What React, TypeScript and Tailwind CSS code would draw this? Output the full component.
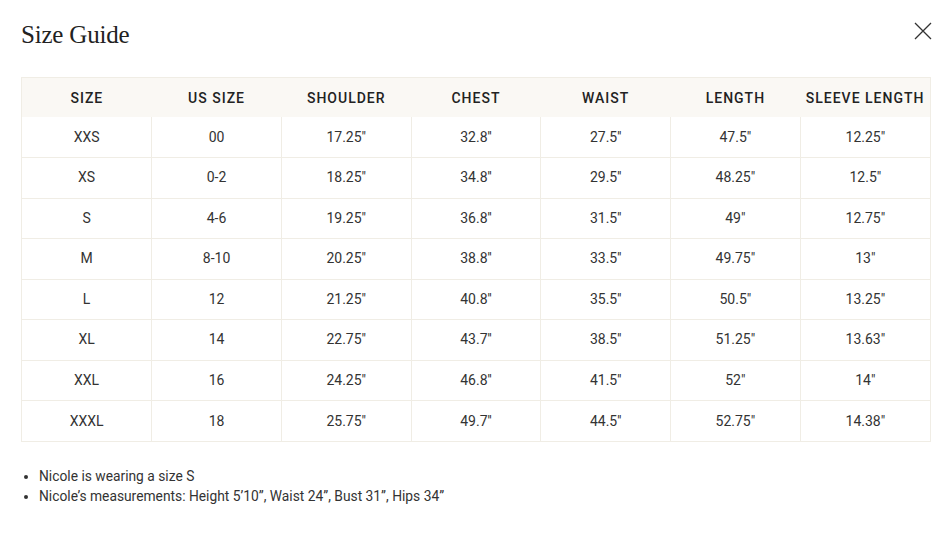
import React from 'react';

const headers = ['Size', 'US Size', 'Shoulder', 'Chest', 'Waist', 'Length', 'Sleeve Length'];

const rows = [
  ['XXS', '00', '17.25"', "32.8''", "27.5''", '47.5"', '12.25"'],
  ['XS', '0-2', '18.25"', "34.8''", "29.5''", '48.25"', '12.5"'],
  ['S', '4-6', '19.25"', "36.8''", "31.5''", '49"', '12.75"'],
  ['M', '8-10', '20.25"', "38.8''", "33.5''", '49.75"', '13"'],
  ['L', '12', '21.25"', "40.8''", "35.5''", '50.5"', '13.25"'],
  ['XL', '14', '22.75"', "43.7''", "38.5''", '51.25"', '13.63"'],
  ['XXL', '16', '24.25"', "46.8''", "41.5''", '52"', '14"'],
  ['XXXL', '18', '25.75"', "49.7''", "44.5''", '52.75"', '14.38"'],
];

const App = () => {
  return (
    <div className="w-[942px] h-[535px] bg-white text-[#2b2b2b] font-['Roboto','Liberation_Sans',sans-serif] overflow-hidden">
      {/* Header */}
      <div className="flex items-start justify-between pl-[21px] pr-[9px] pt-[20px]">
        <h1 className="font-['Liberation_Serif','Times_New_Roman',serif] text-[25px] leading-[30px] tracking-[-0.2px] text-[#222]">
          Size Guide
        </h1>
        <button className="w-[20px] h-[20px] mt-[1px] text-[#333]">
          <svg viewBox="0 0 20 20" width="20" height="20" fill="none" stroke="currentColor" strokeWidth="1.3">
            <path d="M2 2L18 18M18 2L2 18" />
          </svg>
        </button>
      </div>

      {/* Table */}
      <div className="ml-[21px] mr-[11px] mt-[27px] border border-[#f0ede5]">
        <table className="w-full border-collapse table-fixed">
          <thead>
            <tr className="bg-[#faf8f4] h-[39px]">
              {headers.map((h) => (
                <th key={h} className="uppercase text-[14px] font-medium tracking-[1px] text-[#222] whitespace-nowrap pt-[2px]">
                  {h}
                </th>
              ))}
            </tr>
          </thead>
          <tbody>
            {rows.map((r, i) => (
              <tr key={i} className="h-[40.5px] border-t border-[#f0ede5] first:border-t-0">
                {r.map((c, j) => (
                  <td key={j} className={`text-center text-[14px] text-[#333] ${j > 0 ? 'border-l border-[#f0ede5]' : ''}`}>
                    {c}
                  </td>
                ))}
              </tr>
            ))}
          </tbody>
        </table>
      </div>

      {/* Notes */}
      <ul className="mt-[24px] pl-[39px] list-disc text-[13.8px] leading-[20px] text-[#333] marker:text-[#333]">
        <li>Nicole is wearing a size S</li>
        <li>Nicole’s measurements: Height 5’10”, Waist 24”, Bust 31”, Hips 34”</li>
      </ul>
    </div>
  );
};

export default App;
